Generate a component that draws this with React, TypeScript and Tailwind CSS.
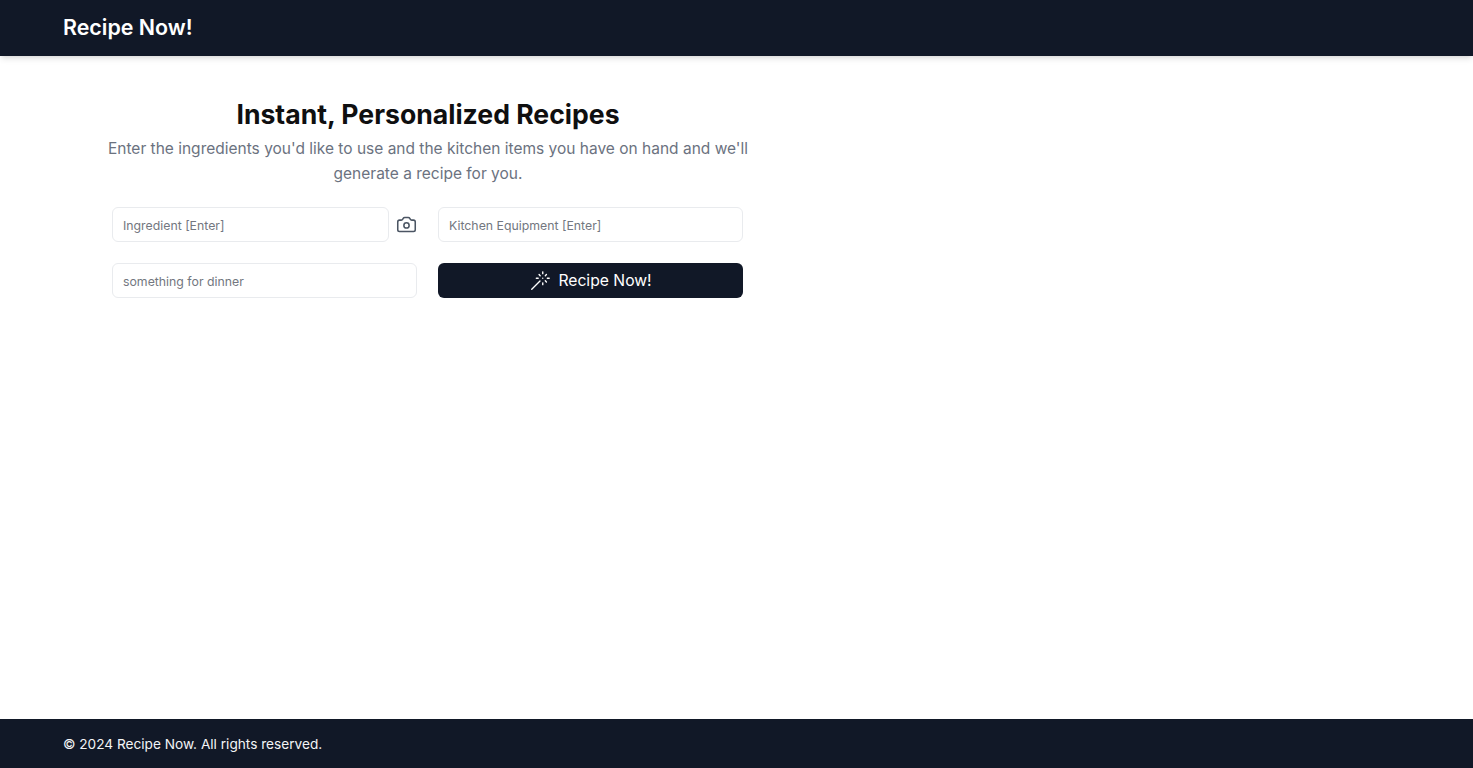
import { Camera, Wand } from "lucide-react";

export default function App() {
  return (
    <div className="flex h-[768px] flex-col overflow-hidden bg-white font-['Inter',sans-serif]">
      <header className="z-10 flex h-14 shrink-0 items-center bg-[#111827] px-[63px] shadow-md">
        <h1 className="-mt-[1px] text-[21.4px] font-semibold text-white">Recipe Now!</h1>
      </header>
      <main className="flex-1">
        <div className="w-[856px] pt-[41px] pl-[98px]">
          <div className="w-[660px] text-center">
            <h2 className="text-[26.6px] leading-[34px] font-bold text-[#0f0f10]">Instant, Personalized Recipes</h2>
            <p className="mt-[5px] text-[15.5px] leading-[25px] text-[#6b7280]">
              Enter the ingredients you'd like to use and the kitchen items you have on hand and we'll
              <br />
              generate a recipe for you.
            </p>
          </div>
          <div className="mt-[21px] ml-[14px] grid w-[632px] grid-cols-[305px_305px] gap-x-[21px] gap-y-[21px]">
            <div className="flex items-center">
              <input
                placeholder="Ingredient [Enter]"
                className="h-[35px] w-[277px] rounded-md border border-[#e9ebee] px-[10px] pt-[1px] text-[12.3px] outline-none placeholder:text-[#737780]"
              />
              <Camera className="ml-[7px] size-[21px] text-[#4b5563]" strokeWidth={1.75} />
            </div>
            <input
              placeholder="Kitchen Equipment [Enter]"
              className="h-[35px] w-[305px] rounded-md border border-[#e9ebee] px-[10px] pt-[1px] text-[12.3px] outline-none placeholder:text-[#737780]"
            />
            <input
              placeholder="something for dinner"
              className="h-[35px] w-[305px] rounded-md border border-[#e9ebee] px-[10px] pt-[1px] text-[12.3px] outline-none placeholder:text-[#737780]"
            />
            <button className="flex h-[35px] items-center justify-center gap-[7px] rounded-md bg-[#111827] text-[15.7px] font-normal text-white">
              <Wand className="size-[22px]" strokeWidth={1.5} />
              Recipe Now!
            </button>
          </div>
        </div>
      </main>
      <footer className="flex h-[49px] shrink-0 items-center bg-[#111827] px-[63px] text-[13.65px] font-normal text-[#f3f4f6]">
        <span className="translate-y-[0.5px]">© 2024 Recipe Now. All rights reserved.</span>
      </footer>
    </div>
  );
}
